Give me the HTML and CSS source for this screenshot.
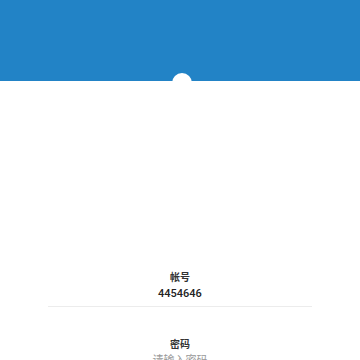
FILE: index.html
```html
<!DOCTYPE html>
<html lang="zh">
<head>
<meta charset="utf-8">
<link rel="stylesheet" href="styles.css">
</head>
<body>
<div class="header"></div>
<div class="avatar"></div>
<div class="form">
  <div class="field">
    <div class="label">帐号</div>
    <div class="value">4454646</div>
  </div>
  <div class="field">
    <div class="label">密码</div>
    <div class="value placeholder">请输入密码</div>
  </div>
</div>
</body>
</html>
```
FILE: styles.css
```css
html, body {
  margin: 0;
  padding: 0;
  background: #fff;
  font-family: "Liberation Sans", "Noto Sans CJK SC", sans-serif;
}
.header {
  height: 81px;
  background: #2283c6;
}
.avatar {
  width: 20px;
  height: 20px;
  border-radius: 50%;
  background: #fff;
  margin: -8px 0 0 172px;
}
.form {
  margin-top: 179px;
  padding: 0 48px;
}
.field {
  text-align: center;
  border-bottom: 1px solid #ececec;
  padding-bottom: 5px;
  margin-bottom: 32px;
}
.label {
  font-size: 10px;
  line-height: 12px;
  font-weight: bold;
  color: #333;
}
.value {
  margin-top: 3px;
  font-family: Roboto, "Noto Sans CJK SC", sans-serif;
  font-size: 11px;
  line-height: 14px;
  font-weight: 500;
  color: #222;
}
.placeholder {
  font-weight: 400;
  color: #999;
}
```
